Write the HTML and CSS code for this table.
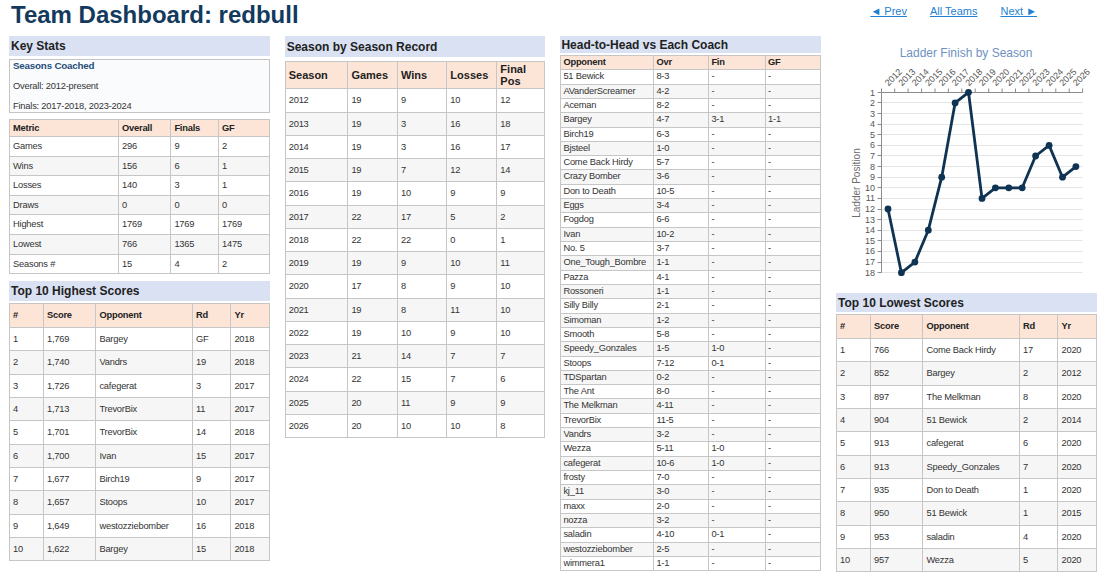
FILE: index.html
```html
<!DOCTYPE html>
<html lang="en">
<head>
<meta charset="utf-8">
<title>Team Dashboard: redbull</title>
<link rel="stylesheet" href="styles.css">
</head>
<body>
<div class="page">
  <header class="topbar">
    <h1 class="title">Team Dashboard: redbull</h1>
    <nav class="nav">
      <a href="#">◄ Prev</a>
      <a href="#">All Teams</a>
      <a href="#">Next ►</a>
    </nav>
  </header>

  <main class="grid">
    <!-- Column 1 -->
    <section class="col">
      <h2 class="sec-h">Key Stats</h2>
      <div class="coached">
        <div class="coached-h">Seasons Coached</div>
        <p>Overall: 2012-present</p>
        <p>Finals: 2017-2018, 2023-2024</p>
      </div>
      <table class="tbl ks">
        <colgroup><col class="ks-c1"><col class="ks-c2"><col class="ks-c3"><col></colgroup>
        <thead><tr><th>Metric</th><th>Overall</th><th>Finals</th><th>GF</th></tr></thead>
        <tbody>
          <tr><td>Games</td><td>296</td><td>9</td><td>2</td></tr>
          <tr><td>Wins</td><td>156</td><td>6</td><td>1</td></tr>
          <tr><td>Losses</td><td>140</td><td>3</td><td>1</td></tr>
          <tr><td>Draws</td><td>0</td><td>0</td><td>0</td></tr>
          <tr><td>Highest</td><td>1769</td><td>1769</td><td>1769</td></tr>
          <tr><td>Lowest</td><td>766</td><td>1365</td><td>1475</td></tr>
          <tr><td>Seasons #</td><td>15</td><td>4</td><td>2</td></tr>
        </tbody>
      </table>

      <h2 class="sec-h sec-top">Top 10 Highest Scores</h2>
      <table class="tbl top">
        <colgroup><col class="t-c1"><col class="t-c2"><col class="t-c3"><col class="t-c4"><col></colgroup>
        <thead><tr><th>#</th><th>Score</th><th>Opponent</th><th>Rd</th><th>Yr</th></tr></thead>
        <tbody>
          <tr><td>1</td><td>1,769</td><td>Bargey</td><td>GF</td><td>2018</td></tr>
          <tr><td>2</td><td>1,740</td><td>Vandrs</td><td>19</td><td>2018</td></tr>
          <tr><td>3</td><td>1,726</td><td>cafegerat</td><td>3</td><td>2017</td></tr>
          <tr><td>4</td><td>1,713</td><td>TrevorBix</td><td>11</td><td>2017</td></tr>
          <tr><td>5</td><td>1,701</td><td>TrevorBix</td><td>14</td><td>2018</td></tr>
          <tr><td>6</td><td>1,700</td><td>Ivan</td><td>15</td><td>2017</td></tr>
          <tr><td>7</td><td>1,677</td><td>Birch19</td><td>9</td><td>2017</td></tr>
          <tr><td>8</td><td>1,657</td><td>Stoops</td><td>10</td><td>2017</td></tr>
          <tr><td>9</td><td>1,649</td><td>westozziebomber</td><td>16</td><td>2018</td></tr>
          <tr><td>10</td><td>1,622</td><td>Bargey</td><td>15</td><td>2018</td></tr>
        </tbody>
      </table>
    </section>

    <!-- Column 2 -->
    <section class="col">
      <h2 class="sec-h sec-season">Season by Season Record</h2>
      <table class="tbl season">
        <colgroup><col class="s-c1"><col class="s-c2"><col class="s-c3"><col class="s-c4"><col></colgroup>
        <thead><tr><th>Season</th><th>Games</th><th>Wins</th><th>Losses</th><th>Final Pos</th></tr></thead>
        <tbody>
          <tr><td>2012</td><td>19</td><td>9</td><td>10</td><td>12</td></tr>
          <tr><td>2013</td><td>19</td><td>3</td><td>16</td><td>18</td></tr>
          <tr><td>2014</td><td>19</td><td>3</td><td>16</td><td>17</td></tr>
          <tr><td>2015</td><td>19</td><td>7</td><td>12</td><td>14</td></tr>
          <tr><td>2016</td><td>19</td><td>10</td><td>9</td><td>9</td></tr>
          <tr><td>2017</td><td>22</td><td>17</td><td>5</td><td>2</td></tr>
          <tr><td>2018</td><td>22</td><td>22</td><td>0</td><td>1</td></tr>
          <tr><td>2019</td><td>19</td><td>9</td><td>10</td><td>11</td></tr>
          <tr><td>2020</td><td>17</td><td>8</td><td>9</td><td>10</td></tr>
          <tr><td>2021</td><td>19</td><td>8</td><td>11</td><td>10</td></tr>
          <tr><td>2022</td><td>19</td><td>10</td><td>9</td><td>10</td></tr>
          <tr><td>2023</td><td>21</td><td>14</td><td>7</td><td>7</td></tr>
          <tr><td>2024</td><td>22</td><td>15</td><td>7</td><td>6</td></tr>
          <tr><td>2025</td><td>20</td><td>11</td><td>9</td><td>9</td></tr>
          <tr><td>2026</td><td>20</td><td>10</td><td>10</td><td>8</td></tr>
        </tbody>
      </table>
    </section>

    <!-- Column 3 -->
    <section class="col">
      <h2 class="sec-h sec-h2h">Head-to-Head vs Each Coach</h2>
      <table class="tbl h2h">
        <colgroup><col class="h-c1"><col class="h-c2"><col class="h-c3"><col></colgroup>
        <thead><tr><th>Opponent</th><th>Ovr</th><th>Fin</th><th>GF</th></tr></thead>
        <tbody>
          <tr><td>51 Bewick</td><td>8-3</td><td>-</td><td>-</td></tr>
          <tr><td>AVanderScreamer</td><td>4-2</td><td>-</td><td>-</td></tr>
          <tr><td>Aceman</td><td>8-2</td><td>-</td><td>-</td></tr>
          <tr><td>Bargey</td><td>4-7</td><td>3-1</td><td>1-1</td></tr>
          <tr><td>Birch19</td><td>6-3</td><td>-</td><td>-</td></tr>
          <tr><td>Bjsteel</td><td>1-0</td><td>-</td><td>-</td></tr>
          <tr><td>Come Back Hirdy</td><td>5-7</td><td>-</td><td>-</td></tr>
          <tr><td>Crazy Bomber</td><td>3-6</td><td>-</td><td>-</td></tr>
          <tr><td>Don to Death</td><td>10-5</td><td>-</td><td>-</td></tr>
          <tr><td>Eggs</td><td>3-4</td><td>-</td><td>-</td></tr>
          <tr><td>Fogdog</td><td>6-6</td><td>-</td><td>-</td></tr>
          <tr><td>Ivan</td><td>10-2</td><td>-</td><td>-</td></tr>
          <tr><td>No. 5</td><td>3-7</td><td>-</td><td>-</td></tr>
          <tr><td>One_Tough_Bombre</td><td>1-1</td><td>-</td><td>-</td></tr>
          <tr><td>Pazza</td><td>4-1</td><td>-</td><td>-</td></tr>
          <tr><td>Rossoneri</td><td>1-1</td><td>-</td><td>-</td></tr>
          <tr><td>Silly Billy</td><td>2-1</td><td>-</td><td>-</td></tr>
          <tr><td>Simoman</td><td>1-2</td><td>-</td><td>-</td></tr>
          <tr><td>Smooth</td><td>5-8</td><td>-</td><td>-</td></tr>
          <tr><td>Speedy_Gonzales</td><td>1-5</td><td>1-0</td><td>-</td></tr>
          <tr><td>Stoops</td><td>7-12</td><td>0-1</td><td>-</td></tr>
          <tr><td>TDSpartan</td><td>0-2</td><td>-</td><td>-</td></tr>
          <tr><td>The Ant</td><td>8-0</td><td>-</td><td>-</td></tr>
          <tr><td>The Melkman</td><td>4-11</td><td>-</td><td>-</td></tr>
          <tr><td>TrevorBix</td><td>11-5</td><td>-</td><td>-</td></tr>
          <tr><td>Vandrs</td><td>3-2</td><td>-</td><td>-</td></tr>
          <tr><td>Wezza</td><td>5-11</td><td>1-0</td><td>-</td></tr>
          <tr><td>cafegerat</td><td>10-6</td><td>1-0</td><td>-</td></tr>
          <tr><td>frosty</td><td>7-0</td><td>-</td><td>-</td></tr>
          <tr><td>kj_11</td><td>3-0</td><td>-</td><td>-</td></tr>
          <tr><td>maxx</td><td>2-0</td><td>-</td><td>-</td></tr>
          <tr><td>nozza</td><td>3-2</td><td>-</td><td>-</td></tr>
          <tr><td>saladin</td><td>4-10</td><td>0-1</td><td>-</td></tr>
          <tr><td>westozziebomber</td><td>2-5</td><td>-</td><td>-</td></tr>
          <tr><td>wimmera1</td><td>1-1</td><td>-</td><td>-</td></tr>
        </tbody>
      </table>
    </section>

    <!-- Column 4 -->
    <section class="col">
      <svg class="chart" width="261" height="257" viewBox="0 0 261 257" xmlns="http://www.w3.org/2000/svg">
        <text class="c-title" x="130" y="20.7" text-anchor="middle">Ladder Finish by Season</text>
        <g class="c-grid">
          <path d="M45.3 66.5H246.6M45.3 77.5H246.6M45.3 88.5H246.6M45.3 98.5H246.6M45.3 109.5H246.6M45.3 119.5H246.6M45.3 130.5H246.6M45.3 141.5H246.6M45.3 151.5H246.6M45.3 162.5H246.6M45.3 173.5H246.6M45.3 183.5H246.6M45.3 194.5H246.6M45.3 204.5H246.6M45.3 215.5H246.6M45.3 226.5H246.6M45.3 236.5H246.6"/>
        </g>
        <g class="c-axis">
          <path d="M45.3 56.5H246.6M45.5 56.5V236.7"/>
          <path d="M45.5 56.5V52.5M58.7 56.5V52.5M72.1 56.5V52.5M85.6 56.5V52.5M99 56.5V52.5M112.4 56.5V52.5M125.8 56.5V52.5M139.2 56.5V52.5M152.7 56.5V52.5M166.1 56.5V52.5M179.5 56.5V52.5M192.9 56.5V52.5M206.3 56.5V52.5M219.8 56.5V52.5M233.2 56.5V52.5M246.6 56.5V52.5"/>
          <path d="M41.5 56.5H45.5M41.5 66.5H45.5M41.5 77.5H45.5M41.5 88.5H45.5M41.5 98.5H45.5M41.5 109.5H45.5M41.5 119.5H45.5M41.5 130.5H45.5M41.5 141.5H45.5M41.5 151.5H45.5M41.5 162.5H45.5M41.5 173.5H45.5M41.5 183.5H45.5M41.5 194.5H45.5M41.5 204.5H45.5M41.5 215.5H45.5M41.5 226.5H45.5M41.5 236.5H45.5"/>
        </g>
        <g class="c-ylab" text-anchor="end">
          <text x="39" y="59.5">1</text>
          <text x="39" y="70">2</text>
          <text x="39" y="80.6">3</text>
          <text x="39" y="91.2">4</text>
          <text x="39" y="101.8">5</text>
          <text x="39" y="112.4">6</text>
          <text x="39" y="123">7</text>
          <text x="39" y="133.6">8</text>
          <text x="39" y="144.2">9</text>
          <text x="39" y="154.8">10</text>
          <text x="39" y="165.4">11</text>
          <text x="39" y="176">12</text>
          <text x="39" y="186.6">13</text>
          <text x="39" y="197.2">14</text>
          <text x="39" y="207.8">15</text>
          <text x="39" y="218.4">16</text>
          <text x="39" y="229">17</text>
          <text x="39" y="239.7">18</text>
        </g>
        <g class="c-xlab">
          <text x="52.5" y="50.5" transform="rotate(-45 52.5 50.5)">2012</text>
          <text x="65.9" y="50.5" transform="rotate(-45 65.9 50.5)">2013</text>
          <text x="79.4" y="50.5" transform="rotate(-45 79.4 50.5)">2014</text>
          <text x="92.8" y="50.5" transform="rotate(-45 92.8 50.5)">2015</text>
          <text x="106.2" y="50.5" transform="rotate(-45 106.2 50.5)">2016</text>
          <text x="119.6" y="50.5" transform="rotate(-45 119.6 50.5)">2017</text>
          <text x="133" y="50.5" transform="rotate(-45 133 50.5)">2018</text>
          <text x="146.5" y="50.5" transform="rotate(-45 146.5 50.5)">2019</text>
          <text x="159.9" y="50.5" transform="rotate(-45 159.9 50.5)">2020</text>
          <text x="173.3" y="50.5" transform="rotate(-45 173.3 50.5)">2021</text>
          <text x="186.7" y="50.5" transform="rotate(-45 186.7 50.5)">2022</text>
          <text x="200.1" y="50.5" transform="rotate(-45 200.1 50.5)">2023</text>
          <text x="213.6" y="50.5" transform="rotate(-45 213.6 50.5)">2024</text>
          <text x="227" y="50.5" transform="rotate(-45 227 50.5)">2025</text>
          <text x="240.4" y="50.5" transform="rotate(-45 240.4 50.5)">2026</text>
        </g>
        <text class="c-ytitle" x="24" y="147" text-anchor="middle" transform="rotate(-90 24 147)">Ladder Position</text>
        <path class="c-line" d="M52 173L65.4 236.7L78.9 226.1L92.3 194.2L105.7 141.2L119.1 66.9L132.5 56.3L146 162.4L159.4 151.8L172.8 151.8L186.2 151.8L199.6 120L213.1 109.4L226.5 141.2L239.9 130.6"/>
        <g class="c-pts">
          <circle cx="52" cy="173" r="3.4"/>
          <circle cx="65.4" cy="236.7" r="3.4"/>
          <circle cx="78.9" cy="226.1" r="3.4"/>
          <circle cx="92.3" cy="194.2" r="3.4"/>
          <circle cx="105.7" cy="141.2" r="3.4"/>
          <circle cx="119.1" cy="66.9" r="3.4"/>
          <circle cx="132.5" cy="56.3" r="3.4"/>
          <circle cx="146" cy="162.4" r="3.4"/>
          <circle cx="159.4" cy="151.8" r="3.4"/>
          <circle cx="172.8" cy="151.8" r="3.4"/>
          <circle cx="186.2" cy="151.8" r="3.4"/>
          <circle cx="199.6" cy="120" r="3.4"/>
          <circle cx="213.1" cy="109.4" r="3.4"/>
          <circle cx="226.5" cy="141.2" r="3.4"/>
          <circle cx="239.9" cy="130.6" r="3.4"/>
        </g>
      </svg>

      <h2 class="sec-h sec-low">Top 10 Lowest Scores</h2>
      <table class="tbl top">
        <colgroup><col class="t-c1"><col class="t-c2"><col class="t-c3"><col class="t-c4"><col></colgroup>
        <thead><tr><th>#</th><th>Score</th><th>Opponent</th><th>Rd</th><th>Yr</th></tr></thead>
        <tbody>
          <tr><td>1</td><td>766</td><td>Come Back Hirdy</td><td>17</td><td>2020</td></tr>
          <tr><td>2</td><td>852</td><td>Bargey</td><td>2</td><td>2012</td></tr>
          <tr><td>3</td><td>897</td><td>The Melkman</td><td>8</td><td>2020</td></tr>
          <tr><td>4</td><td>904</td><td>51 Bewick</td><td>2</td><td>2014</td></tr>
          <tr><td>5</td><td>913</td><td>cafegerat</td><td>6</td><td>2020</td></tr>
          <tr><td>6</td><td>913</td><td>Speedy_Gonzales</td><td>7</td><td>2020</td></tr>
          <tr><td>7</td><td>935</td><td>Don to Death</td><td>1</td><td>2020</td></tr>
          <tr><td>8</td><td>950</td><td>51 Bewick</td><td>1</td><td>2015</td></tr>
          <tr><td>9</td><td>953</td><td>saladin</td><td>4</td><td>2020</td></tr>
          <tr><td>10</td><td>957</td><td>Wezza</td><td>5</td><td>2020</td></tr>
        </tbody>
      </table>
    </section>
  </main>
</div>
</body>
</html>
```

FILE: styles.css
```css
* { box-sizing: border-box; }

html, body {
  margin: 0;
  padding: 0;
  background: #ffffff;
}

body {
  font-family: "Liberation Sans", Arial, sans-serif;
  color: #333333;
}

.page {
  width: 1116px;
  padding: 1px 0 0 9px;
}

/* ---------- top bar ---------- */
.topbar {
  display: flex;
  align-items: flex-start;
  height: 35px;
}

.title {
  margin: 0 0 0 2px;
  font-size: 24px;
  line-height: 28px;
  font-weight: bold;
  color: #133a5e;
}

.nav {
  display: flex;
  gap: 23px;
  margin: 4px 79px 0 auto;
  font-size: 11px;
  line-height: 13px;
}

.nav a {
  color: #1f7fd1;
  text-decoration: underline;
}

/* ---------- grid ---------- */
.grid {
  display: grid;
  grid-template-columns: repeat(4, 260.5px);
  column-gap: 15.2px;
  align-items: start;
}

.col {
  display: flex;
  flex-direction: column;
}

/* ---------- section headings ---------- */
.sec-h {
  margin: 0;
  background: #d9e1f2;
  font-size: 12px;
  line-height: 14px;
  font-weight: bold;
  color: #222222;
  padding: 3px 4px 2.5px 2px;
}

.sec-season { padding: 4px 4px 2.7px 2px; }
.sec-h2h { padding: 2px 4px 1.3px 1px; }
.sec-top { margin-top: 7.3px; }
.sec-low { padding: 3px 4px 2px 2px; }

/* ---------- seasons coached box ---------- */
.coached {
  margin-top: 3.5px;
  border: 1px solid #c4c4c4;
  background: #fafbfd;
  padding: 0 3px;
  display: flex;
  flex-direction: column;
  gap: 8px;
  font-size: 9.3px;
  letter-spacing: -0.2px;
  line-height: 12px;
  color: #333333;
}

.coached-h {
  font-size: 9.8px;
  font-weight: bold;
  color: #1f4e79;
}

.coached p { margin: 0; }

/* ---------- tables ---------- */
.tbl {
  width: 100%;
  border-collapse: collapse;
  table-layout: fixed;
  font-size: 9.3px;
  letter-spacing: -0.2px;
  color: #333333;
}

.tbl th,
.tbl td {
  border: 1px solid #c6c6c6;
  text-align: left;
  vertical-align: middle;
  white-space: nowrap;
  overflow: hidden;
  padding: 0 3px;
}

.tbl th {
  background: #fce4d6;
  font-weight: bold;
  color: #222222;
}

.tbl tbody tr:nth-child(even) td {
  background: #f6f6f6;
}

/* key stats */
.ks { margin-top: 6px; }
.ks th { padding: 2px 3px; line-height: 12.3px; }
.ks td { padding: 3px; line-height: 12.55px; }
.ks-c1 { width: 109px; }
.ks-c2 { width: 52.4px; }
.ks-c3 { width: 47.6px; }

/* top 10 */
.top { margin-top: 2.3px; }
.top th { padding: 5px 3px; line-height: 12.7px; }
.top td { padding: 5px 3px; line-height: 12.33px; }
.t-c1 { width: 34px; }
.t-c2 { width: 52.4px; }
.t-c3 { width: 96.6px; }
.t-c4 { width: 38.4px; }

/* season table */
.season { margin-top: 4px; }
.season th {
  font-size: 11px;
  letter-spacing: 0;
  line-height: 12.3px;
  padding: 1px 3px;
  white-space: normal;
}
.season td { padding: 5px 3px; line-height: 12.27px; }
.s-c1 { width: 62.7px; }
.s-c2 { width: 49.6px; }
.s-c3 { width: 49.4px; }
.s-c4 { width: 50px; }

/* head to head */
.h2h { margin-top: 1.7px; }
.h2h th,
.h2h td { padding: 1px 2px; line-height: 11.32px; }
.h-c1 { width: 93px; }
.h-c2 { width: 55px; }
.h-c3 { width: 56.7px; }

/* ---------- chart ---------- */
.chart {
  display: block;
  font-family: "Liberation Sans", Arial, sans-serif;
}

.c-title {
  font-size: 12px;
  fill: #6e91c2;
}

.c-grid path {
  stroke: #e6e6e6;
  stroke-width: 1;
  fill: none;
}

.c-axis path {
  stroke: #8c8c8c;
  stroke-width: 1;
  fill: none;
}

.c-ylab text {
  font-size: 9px;
  fill: #555555;
}

.c-xlab text {
  font-size: 9px;
  fill: #555555;
}

.c-ytitle {
  font-size: 10px;
  fill: #6d6d6d;
}

.c-line {
  fill: none;
  stroke: #0f3352;
  stroke-width: 2.8;
  stroke-linejoin: round;
  stroke-linecap: round;
}

.c-pts circle {
  fill: #0f3352;
}
```
